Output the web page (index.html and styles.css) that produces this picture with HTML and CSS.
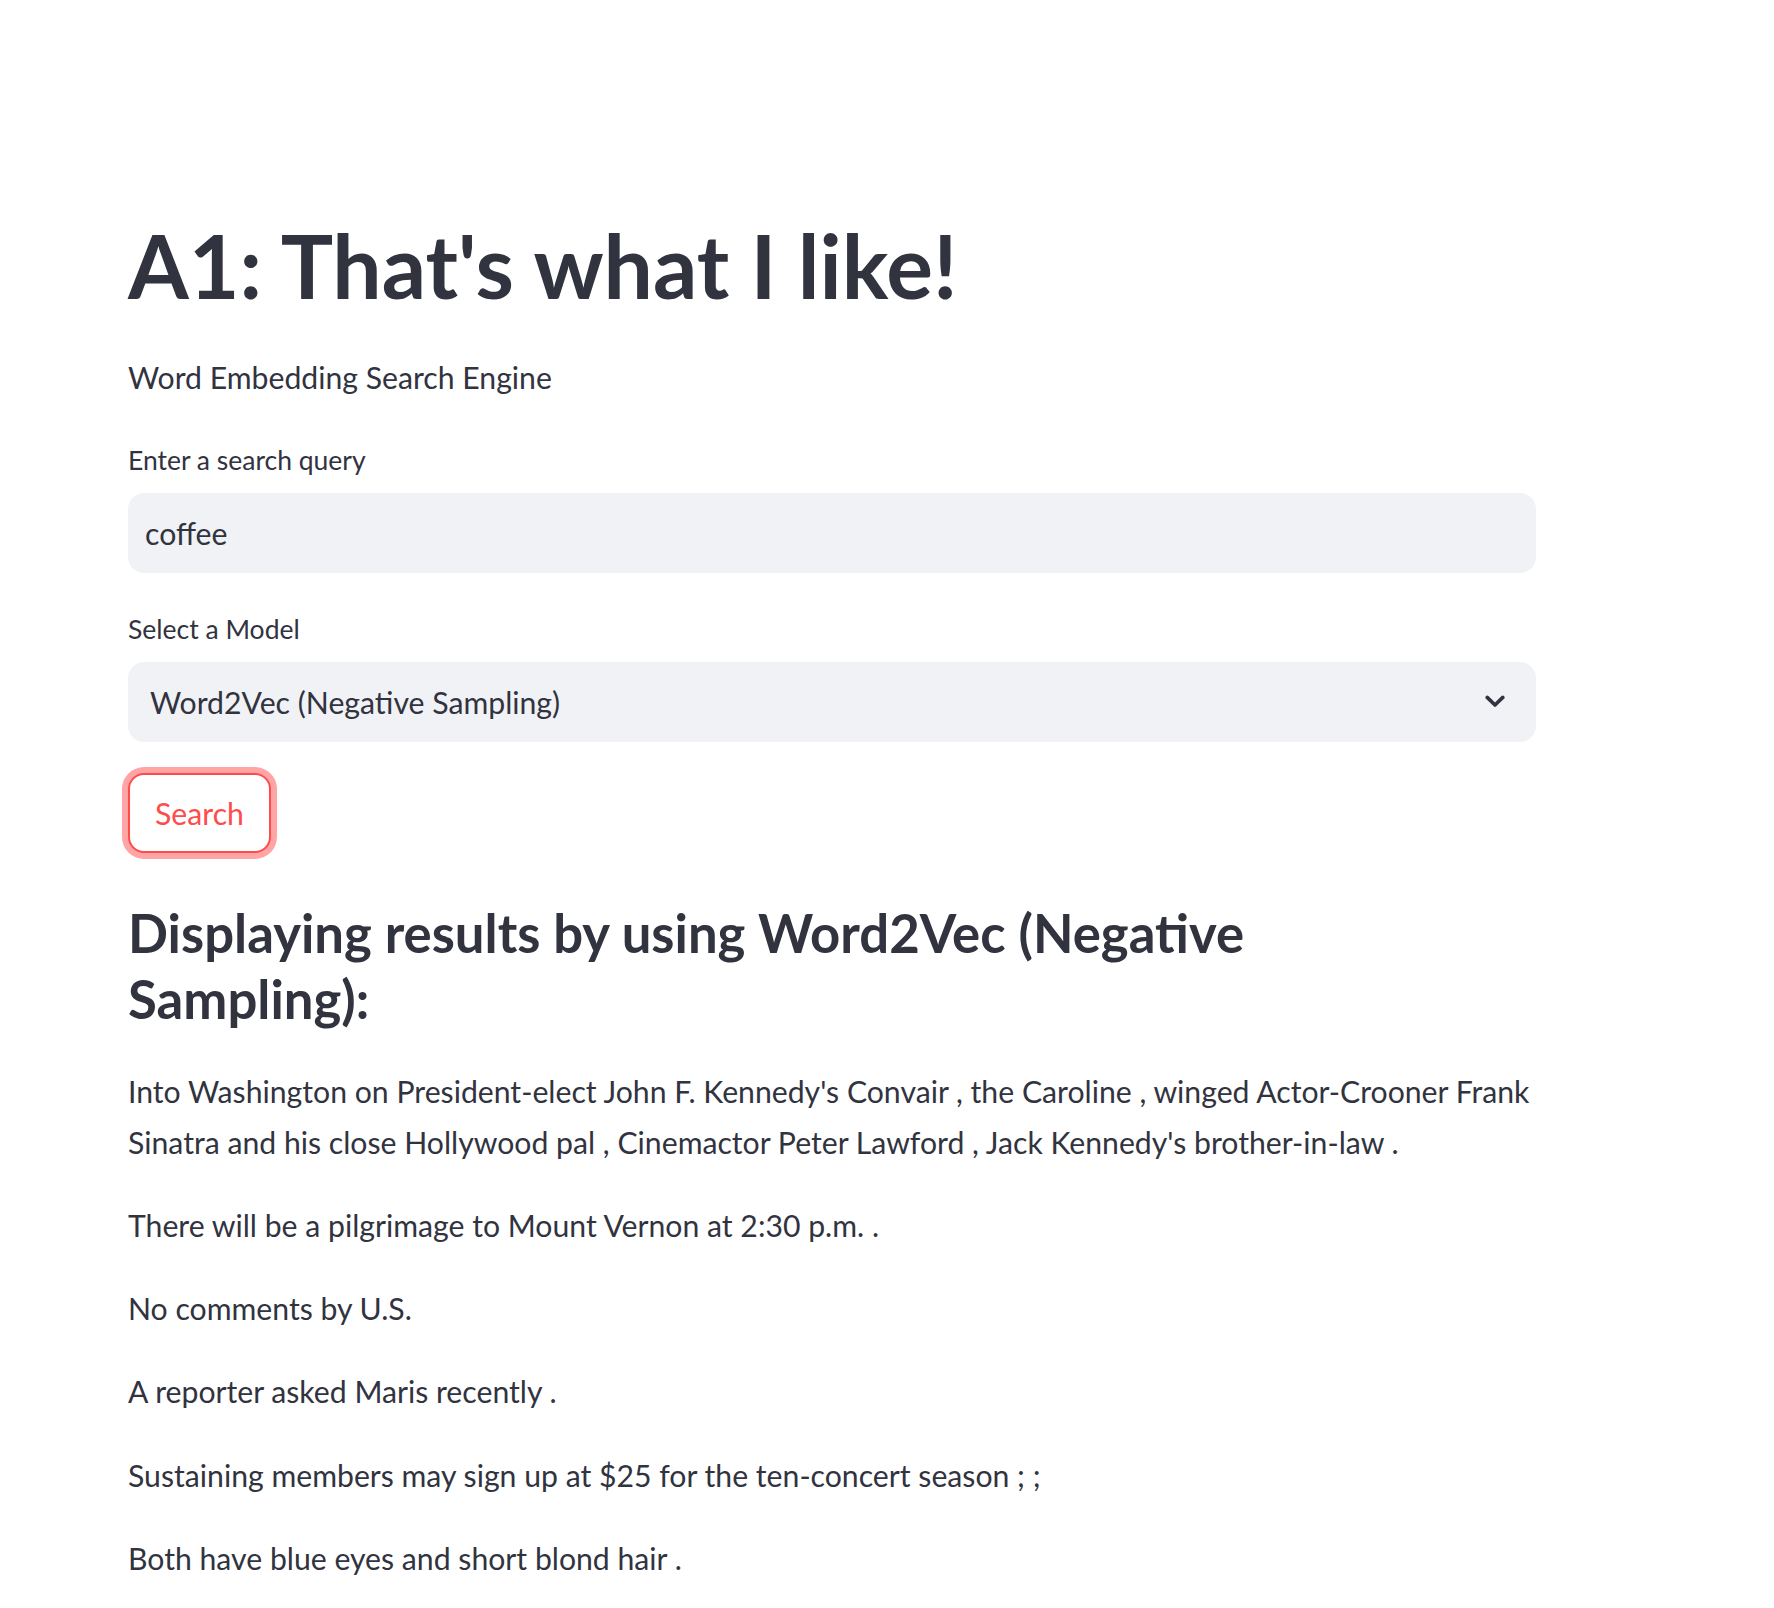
FILE: index.html
```html
<!DOCTYPE html>
<html lang="en">
<head>
<meta charset="utf-8">
<title>A1: That's what I like!</title>
<link rel="stylesheet" href="styles.css">
</head>
<body>
<main class="main">
  <h1 class="title">A1: That's what I like!</h1>
  <p class="subtitle">Word Embedding Search Engine</p>

  <label class="field-label" for="query">Enter a search query</label>
  <input class="text-input" id="query" type="text" value="coffee">

  <div class="field-label field-label-select">Select a Model</div>
  <div class="select-box">
    <span class="select-value">Word2Vec (Negative Sampling)</span>
    <svg class="chevron" viewBox="0 0 20 13" width="20" height="13" aria-hidden="true">
      <path d="M2.2 2.4 L10 10 L17.8 2.4" fill="none" stroke="#31333F" stroke-width="3.6" stroke-linecap="round" stroke-linejoin="round"/>
    </svg>
  </div>

  <button class="search-btn" type="button">Search</button>

  <h3 class="results-title">Displaying results by using Word2Vec (Negative Sampling):</h3>

  <div class="results">
    <p class="result">Into Washington on President-elect John F. Kennedy's Convair , the Caroline , winged Actor-Crooner Frank Sinatra and his close Hollywood pal , Cinemactor Peter Lawford , Jack Kennedy's brother-in-law .</p>
    <p class="result">There will be a pilgrimage to Mount Vernon at 2:30 p.m. .</p>
    <p class="result">No comments by U.S.</p>
    <p class="result">A reporter asked Maris recently .</p>
    <p class="result">Sustaining members may sign up at $25 for the ten-concert season ; ;</p>
    <p class="result">Both have blue eyes and short blond hair .</p>
  </div>
</main>
</body>
</html>
```
FILE: styles.css
```css
html, body {
  margin: 0;
  padding: 0;
  background: #ffffff;
}

body {
  font-family: "Lato", "Noto Sans", sans-serif;
  color: #31333f;
}

.main {
  width: 1408px;
  margin: 0 0 0 128px;
  padding: 214px 0 40px 0;
}

.title {
  margin: 0;
  font-size: 87.5px;
  font-weight: 700;
  line-height: 104px;
  letter-spacing: 0;
}

.subtitle {
  margin: 33.5px 0 0 0;
  font-size: 30.2px;
  line-height: 51.2px;
}

.field-label {
  display: block;
  margin: 35.3px 0 10px 0;
  font-size: 26.5px;
  line-height: 44.8px;
  height: 44.8px;
}

.field-label-select {
  margin-top: 34px;
}

.text-input {
  display: block;
  box-sizing: border-box;
  width: 100%;
  height: 80px;
  margin: 0;
  padding: 0 17px;
  border: none;
  outline: none;
  border-radius: 16px;
  background: #f0f2f6;
  font-family: "Lato", "Noto Sans", sans-serif;
  font-size: 30.2px;
  color: #31333f;
}

.select-box {
  display: flex;
  align-items: center;
  justify-content: space-between;
  box-sizing: border-box;
  height: 80px;
  padding: 0 31px 0 22px;
  border-radius: 16px;
  background: #f0f2f6;
  font-size: 30.2px;
}

.select-value {
  line-height: 36px;
}

.chevron {
  display: block;
  flex: none;
}

.search-btn {
  display: block;
  box-sizing: border-box;
  width: 143px;
  height: 80px;
  margin: 31px 0 0 0;
  padding: 0;
  border: 2px solid #ff4b4b;
  border-radius: 16px;
  background: #ffffff;
  box-shadow: 0 0 0 6px rgba(255, 75, 75, 0.5);
  color: #ff4b4b;
  font-family: "Lato", "Noto Sans", sans-serif;
  font-size: 30.2px;
  cursor: pointer;
}

.results-title {
  margin: 47px 0 0 0;
  font-size: 52.7px;
  font-weight: 700;
  line-height: 66px;
  max-width: 1180px;
}

.results {
  margin-top: 34px;
}

.result {
  margin: 0 0 32px 0;
  font-size: 30.2px;
  line-height: 51.2px;
}
```
